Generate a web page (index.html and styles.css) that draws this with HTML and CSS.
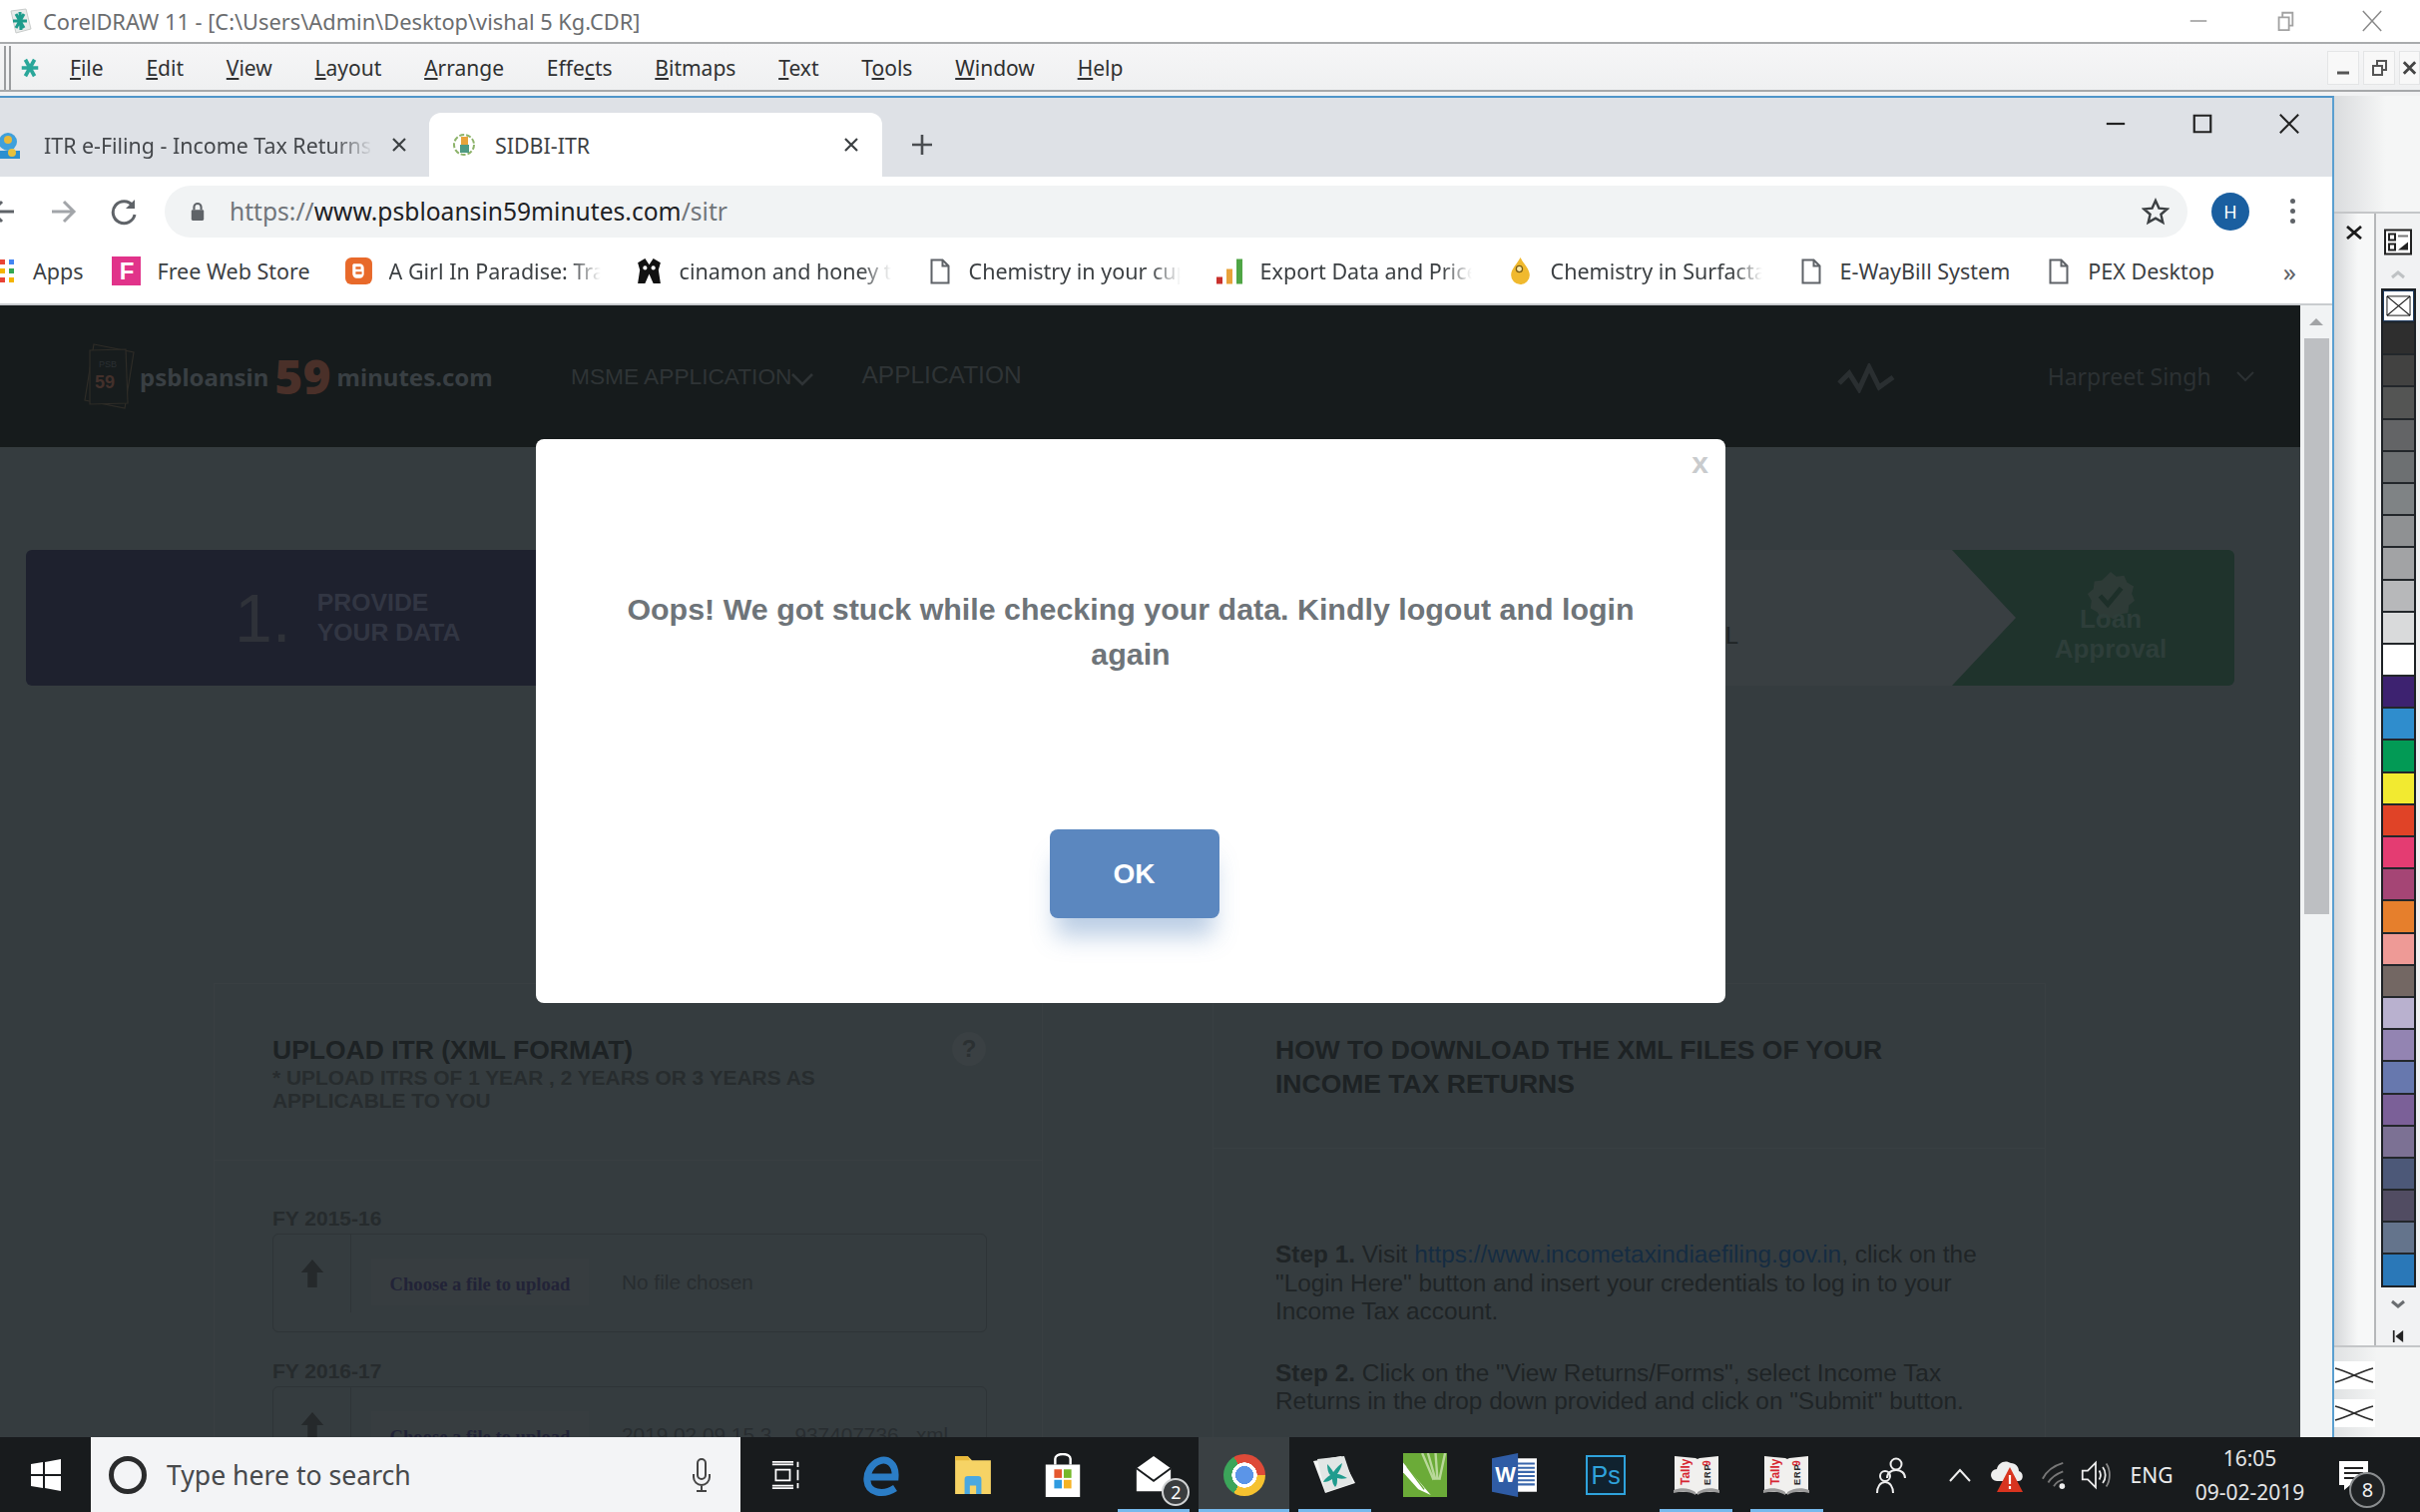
FILE: index.html
```html
<!DOCTYPE html>
<html lang="en">
<head>
    <meta charset="UTF-8">
    <title>CorelDRAW 11 - SIDBI-ITR</title>
    <link rel="stylesheet" href="styles.css">
</head>
<body>
    <div class="corel">
        <div class="titlebar">
            <svg class="corel-logo" viewBox="0 0 24 26"><path d="M3 3l15-2 5 20-15 4z" fill="#e9eceb" stroke="#c9cccb"/><path d="M8 6l8 14M16 6L8 20M12 4l1 18M5 13h14" stroke="#1e9c8c" stroke-width="3"/></svg>
            <span class="title-text">CorelDRAW 11 - [C:\Users\Admin\Desktop\vishal 5 Kg.CDR]</span>
            <div class="win-btns">
                <svg viewBox="0 0 24 24"><path d="M3 12h18" stroke="#aaa" stroke-width="2"/></svg>
                <svg viewBox="0 0 24 24"><path d="M5 8h11v14H5zM9 8V3h11v14h-4" fill="none" stroke="#a2a2a2" stroke-width="2"/></svg>
                <svg viewBox="0 0 24 24"><path d="M2 1l20 22M22 1L2 23" stroke="#8a8a8a" stroke-width="1.6"/></svg>
            </div>
        </div>
        <div class="menubar">
            <div class="grip"></div>
            <svg class="menu-logo" viewBox="0 0 24 28"><path d="M7 5l10 18M17 5L7 23M3 14h18" stroke="#2aa79a" stroke-width="4"/></svg>
            <nav class="menu">
                <span><u>F</u>ile</span>
                <span><u>E</u>dit</span>
                <span><u>V</u>iew</span>
                <span><u>L</u>ayout</span>
                <span><u>A</u>rrange</span>
                <span>Effe<u>c</u>ts</span>
                <span><u>B</u>itmaps</span>
                <span><u>T</u>ext</span>
                <span>T<u>o</u>ols</span>
                <span><u>W</u>indow</span>
                <span><u>H</u>elp</span>
            </nav>
            <div class="mdi-btns">
                <div class="mdi-btn"><svg viewBox="0 0 20 20"><path d="M4 15h12" stroke="#555" stroke-width="3"/></svg></div>
                <div class="mdi-btn"><svg viewBox="0 0 20 20"><path d="M4 8h9v9H4zM8 8V3h9v9h-4" fill="none" stroke="#555" stroke-width="2"/></svg></div>
                <div class="mdi-btn"><svg viewBox="0 0 20 20"><path d="M4 4l12 12M16 4L4 16" stroke="#444" stroke-width="3"/></svg></div>
            </div>
        </div>

        <div class="workspace">
            <div class="browser">
                <div class="tabstrip">
                    <div class="tab tab-back">
                        <svg class="favicon" viewBox="0 0 28 28"><circle cx="10" cy="11" r="9" fill="#3fa0dc"/><circle cx="10" cy="9" r="4" fill="#e8b93a"/><path d="M0 20h22v8H0z" fill="#2b8fd0"/><circle cx="14" cy="22" r="4" fill="#e8c13c"/></svg>
                        <span class="tab-title tab-fade">ITR e-Filing - Income Tax Returns</span>
                        <svg class="tab-close" viewBox="0 0 14 14"><path d="M1 1l12 12M13 1L1 13" stroke="#3c4043" stroke-width="2.2"/></svg>
                    </div>
                    <div class="tab tab-active">
                        <svg class="favicon" viewBox="0 0 28 28"><circle cx="14" cy="14" r="10" fill="none" stroke="#8db36a" stroke-width="2" stroke-dasharray="5 2"/><path d="M11 6h7v8h-7z" fill="#e8a33a"/><path d="M10 14h9v8h-9z" fill="#4f9a83"/></svg>
                        <span class="tab-title">SIDBI-ITR</span>
                        <svg class="tab-close" viewBox="0 0 14 14"><path d="M1 1l12 12M13 1L1 13" stroke="#3c4043" stroke-width="2.2"/></svg>
                    </div>
                    <svg class="new-tab" viewBox="0 0 24 24"><path d="M12 2v20M2 12h20" stroke="#4a4d51" stroke-width="2.6"/></svg>
                    <div class="chrome-btns">
                        <svg viewBox="0 0 24 24"><path d="M2 12h20" stroke="#222" stroke-width="2.4"/></svg>
                        <svg viewBox="0 0 24 24"><path d="M3 3h18v18H3z" fill="none" stroke="#222" stroke-width="2.4"/></svg>
                        <svg viewBox="0 0 24 24"><path d="M2 2l20 20M22 2L2 22" stroke="#222" stroke-width="2.2"/></svg>
                    </div>
                </div>

                <div class="toolbar">
                    <svg class="nav-icon nav-back" viewBox="0 0 28 28"><path d="M26 14H4M14 4L4 14l10 10" fill="none" stroke="#5f6368" stroke-width="3"/></svg>
                    <svg class="nav-icon nav-fwd" viewBox="0 0 28 28"><path d="M2 14h22M14 4l10 10-10 10" fill="none" stroke="#a2a5a9" stroke-width="3"/></svg>
                    <svg class="nav-icon nav-reload" viewBox="0 0 28 28"><path d="M23 8a11 11 0 1 0 2 9" fill="none" stroke="#5f6368" stroke-width="3"/><path d="M25 2v9h-9z" fill="#5f6368"/></svg>
                    <div class="omnibox">
                        <svg class="lock" viewBox="0 0 18 24"><path d="M5 10V7a4 4 0 0 1 8 0v3" fill="none" stroke="#5f6368" stroke-width="2.4"/><rect x="2" y="10" width="14" height="12" rx="1.5" fill="#5f6368"/></svg>
                        <span class="url"><span class="url-dim">https://</span>www.psbloansin59minutes.com<span class="url-dim">/sitr</span></span>
                        <svg class="star" viewBox="0 0 28 28"><path d="M14 3l3.4 7.6 8.2.8-6.2 5.4 1.900 8.100L14 20.600 6.700 24.900l1.900-8.100L2.400 11.400l8.200-.8z" fill="none" stroke="#3c4043" stroke-width="2.4"/></svg>
                    </div>
                    <div class="avatar">H</div>
                    <div class="kebab"><i></i><i></i><i></i></div>
                </div>

                <div class="bookmarks">
                    <div class="bm bm-apps">
                        <div class="apps-grid"><i></i><i></i><i></i><i></i><i></i><i></i></div>
                        <span>Apps</span>
                    </div>
                    <div class="bm">
                        <div class="bm-icon bm-f">F</div>
                        <span>Free Web Store</span>
                    </div>
                    <div class="bm">
                        <svg class="bm-icon" viewBox="0 0 28 28"><rect x="1" y="1" width="26" height="26" rx="6" fill="#e8692a"/><path d="M9 7h6a4 4 0 0 1 4 4v2a2 2 0 0 1 0 1v3a4 4 0 0 1-4 4H12a4 4 0 0 1-4-4V8z" fill="#fff"/><path d="M11 11h5M11 16h6" stroke="#e8692a" stroke-width="2.4"/></svg>
                        <span class="bm-fade">A Girl In Paradise: Travel</span>
                    </div>
                    <div class="bm">
                        <svg class="bm-icon" viewBox="0 0 28 28"><path d="M3 6l7-4 4 6 4-6 7 4-2 7 2 13h-7l-4-9-4 9H3l2-13z" fill="#111"/><circle cx="10" cy="11" r="2" fill="#fff"/><circle cx="18" cy="11" r="2" fill="#fff"/></svg>
                        <span class="bm-fade">cinamon and honey to lose</span>
                    </div>
                    <div class="bm bm-doc">
                        <svg class="doc" viewBox="0 0 20 26"><path d="M1.500 1.500h11l6 6v17h-17zM12.500 1.500v6h6" fill="none" stroke="#5f6368" stroke-width="2"/></svg>
                        <span class="bm-fade">Chemistry in your cup: checking</span>
                    </div>
                    <div class="bm">
                        <svg class="bm-icon bm-bars" viewBox="0 0 32 28"><path d="M2 20h6v7H2z" fill="#c9302c"/><path d="M12 12h6v15h-6z" fill="#e8a23a"/><path d="M22 2h6v25h-6z" fill="#4fa545"/></svg>
                        <span class="bm-fade">Export Data and Price</span>
                    </div>
                    <div class="bm">
                        <svg class="bm-icon" viewBox="0 0 28 28"><path d="M14 1c3 6 9 11 9 17a9 9 0 0 1-18 0c0-6 6-11 9-17z" fill="#f0b92e"/><circle cx="13" cy="12" r="3" fill="#fbe9a8" stroke="#7a5c12" stroke-width="1.2"/></svg>
                        <span class="bm-fade">Chemistry in Surfactants</span>
                    </div>
                    <div class="bm bm-doc">
                        <svg class="doc" viewBox="0 0 20 26"><path d="M1.500 1.500h11l6 6v17h-17zM12.500 1.500v6h6" fill="none" stroke="#5f6368" stroke-width="2"/></svg>
                        <span>E-WayBill System</span>
                    </div>
                    <div class="bm bm-doc">
                        <svg class="doc" viewBox="0 0 20 26"><path d="M1.500 1.500h11l6 6v17h-17zM12.500 1.500v6h6" fill="none" stroke="#5f6368" stroke-width="2"/></svg>
                        <span>PEX Desktop</span>
                    </div>
                    <span class="bm-more">»</span>
                </div>

                <div class="viewport">
                    <div class="page">
                        <header class="site-header">
                            <svg class="site-logo" viewBox="0 0 56 70"><path d="M14 3l40 8-9 56-40-8z" fill="none" stroke="#2e2c27" stroke-width="1.200"/><path d="M10 9l36-1 2 54-38 1z" fill="#171c1d" stroke="#2e2c27" stroke-width="1.200"/><text x="19" y="26" class="logo-psb">PSB</text><text x="15" y="47" class="logo-59">59</text></svg>
                            <div class="brand"><span>psbloansin</span><b class="brand-59">59</b><span>minutes.com</span></div>
                            <nav class="site-nav">
                                <span class="nav-msme">MSME APPLICATION</span>
                                <svg class="nav-chev" viewBox="0 0 24 14"><path d="M2 2l10 10L22 2" fill="none" stroke="#2f3436" stroke-width="2.6"/></svg>
                                <span class="nav-app">APPLICATION</span>
                            </nav>
                            <svg class="wave" viewBox="0 0 60 30"><path d="M2 20l10-10 10 16 10-22 10 20 14-10" fill="none" stroke="#2a2f31" stroke-width="5"/></svg>
                            <span class="user-name">Harpreet Singh</span>
                            <svg class="user-chev" viewBox="0 0 20 12"><path d="M2 2l8 8 8-8" fill="none" stroke="#2c3133" stroke-width="2"/></svg>
                        </header>

                        <section class="steps">
                            <div class="step-first">
                                <span class="step-num">1.</span>
                                <span class="step-label">PROVIDE<br>YOUR DATA</span>
                            </div>
                            <div class="step-mid"><span class="step-mid-tail">L</span></div>
                            <div class="step-last">
                                <svg class="badge" viewBox="0 0 52 52"><path d="M26 1l6 5 8-1 3 7 7 4-2 8 3 7-6 5-1 8-8 1-5 6-7-3-8 2-4-7-7-4 1-8-4-7 6-5 1-8 8-1z" fill="#2e3b37"/><path d="M15 26l8 9 14-17" fill="none" stroke="#1d2f29" stroke-width="5"/></svg>
                                <span class="step-last-text">Loan<br>Approval</span>
                            </div>
                        </section>

                        <section class="cards">
                            <div class="card card-upload">
                                <div class="card-head">
                                    <h2>UPLOAD ITR (XML FORMAT)</h2>
                                    <p class="card-sub">* UPLOAD ITRS OF 1 YEAR , 2 YEARS OR 3 YEARS AS<br>APPLICABLE TO YOU</p>
                                    <span class="help">?</span>
                                </div>
                                <div class="card-body">
                                    <div class="fy">FY 2015-16</div>
                                    <div class="file-box">
                                        <div class="file-cell"><svg viewBox="0 0 24 30"><path d="M12 0l12 14h-7v16H7V14H0z" fill="#25292b"/></svg></div>
                                        <div class="file-btn">Choose a file to upload</div>
                                        <span class="file-name">No file chosen</span>
                                    </div>
                                    <div class="fy">FY 2016-17</div>
                                    <div class="file-box">
                                        <div class="file-cell"><svg viewBox="0 0 24 30"><path d="M12 0l12 14h-7v16H7V14H0z" fill="#25292b"/></svg></div>
                                        <div class="file-btn">Choose a file to upload</div>
                                        <span class="file-name">2019 02 09 15 3... 937407736...xml</span>
                                    </div>
                                </div>
                            </div>
                            <div class="card card-help">
                                <div class="card-head">
                                    <h2>HOW TO DOWNLOAD THE XML FILES OF YOUR<br>INCOME TAX RETURNS</h2>
                                </div>
                                <div class="card-body">
                                    <p class="how-step"><b>Step 1.</b> Visit <a class="how-link">https://www.incometaxindiaefiling.gov.in</a>, click on the "Login Here" button and insert your credentials to log in to your Income Tax account.</p>
                                    <p class="how-step"><b>Step 2.</b> Click on the "View Returns/Forms", select Income Tax Returns in the drop down provided and click on "Submit" button.</p>
                                </div>
                            </div>
                        </section>

                        <div class="modal">
                            <span class="modal-close">x</span>
                            <p class="modal-msg">Oops! We got stuck while checking your data. Kindly logout and login again</p>
                            <button class="modal-ok">OK</button>
                        </div>
                    </div>
                    <div class="scrollbar">
                        <div class="scroll-up"></div>
                        <div class="scroll-thumb"></div>
                    </div>
                </div>
            </div>

            <aside class="docker">
                <div class="docker-top"></div>
                <div class="docker-main">
                    <div class="docker-panel">
                        <svg class="docker-x" viewBox="0 0 18 14"><path d="M2 1l14 12M16 1L2 13" stroke="#1c1c1c" stroke-width="2.8"/></svg>
                    </div>
                    <div class="palette">
                        <svg class="palette-icon" viewBox="0 0 28 26"><rect x="1" y="1" width="26" height="24" fill="#fff" stroke="#222" stroke-width="2"/><path d="M5 5h6v6H5zM5 15h6v6H5z" fill="none" stroke="#222" stroke-width="2"/><path d="M14 7h10" stroke="#777" stroke-width="2"/><path d="M14 21l10-8v8z" fill="#222"/></svg>
                        <svg class="pal-arrow" viewBox="0 0 16 10"><path d="M2 8l6-5 6 5" fill="none" stroke="#bfc2c4" stroke-width="3"/></svg>
                        <div class="swatches">
                            <div class="swatch-none"><svg viewBox="0 0 26 22"><path d="M1 1h24v20H1z" fill="#fff" stroke="#111"/><path d="M1 1l24 20M25 1L1 21" stroke="#111" stroke-width="1.2"/></svg></div>
                            <i></i><i></i><i></i><i></i><i></i><i></i><i></i><i></i><i></i><i></i>
                            <i></i><i></i><i></i><i></i><i></i><i></i><i></i><i></i><i></i><i></i>
                            <i></i><i></i><i></i><i></i><i></i><i></i><i></i><i></i><i></i><i></i>
                        </div>
                        <svg class="pal-arrow pal-down" viewBox="0 0 16 10"><path d="M2 2l6 5 6-5" fill="none" stroke="#6a6d70" stroke-width="3"/></svg>
                        <svg class="pal-first" viewBox="0 0 14 14"><path d="M1 0h2v14H1zM13 0v14L4 7z" fill="#222"/></svg>
                    </div>
                </div>
                <div class="docker-bottom">
                    <div class="cross-btn"><svg viewBox="0 0 40 20"><path d="M1 3c12 3 26 11 38 14M39 3C27 6 13 14 1 17" fill="none" stroke="#2b2b2b" stroke-width="1.8"/></svg></div>
                    <div class="cross-btn"><svg viewBox="0 0 40 20"><path d="M1 3c12 3 26 11 38 14M39 3C27 6 13 14 1 17" fill="none" stroke="#2b2b2b" stroke-width="1.8"/></svg></div>
                </div>
            </aside>
        </div>
    </div>

    <footer class="taskbar">
        <div class="start"><svg viewBox="0 0 32 32"><path d="M1 5l12-2v12H1zM15 3l16-3v15H15zM1 17h12v12L1 27zM15 17h16v15l-16-3z" fill="#fff"/></svg></div>
        <div class="search">
            <div class="cortana"></div>
            <span class="search-text">Type here to search</span>
            <svg class="mic" viewBox="0 0 20 34"><rect x="6" y="1" width="8" height="20" rx="4" fill="none" stroke="#444" stroke-width="2"/><path d="M2 16v3a8 8 0 0 0 16 0v-3M10 27v6M5 33h10" fill="none" stroke="#444" stroke-width="2"/></svg>
        </div>
        <div class="task task-view"><svg viewBox="0 0 34 36"><path d="M5 12h16v12H5zM1 3h24M1 6h24M1 30h24M1 33h24M30 3v6M30 12v12M30 27v6" fill="none" stroke="#fff" stroke-width="2"/></svg></div>
        <div class="task"><svg viewBox="0 0 40 44"><path d="M7 24h26C34 10 25 5 17 8 9 11 4 20 5 28c1 12 16 15 28 7" fill="none" stroke="#2b7dc6" stroke-width="7"/></svg></div>
        <div class="task"><svg viewBox="0 0 38 40"><path d="M2 2h12l4 4h18v32H2z" fill="#f6d365"/><path d="M2 2h12l2 4H2z" fill="#e8b93a"/><path d="M11 38V24a3 3 0 0 1 3-3h10a3 3 0 0 1 3 3v14h-5v-8h-6v8z" fill="#4aa8e0"/></svg></div>
        <div class="task"><svg viewBox="0 0 38 46"><path d="M1 12h36v34H1z" fill="#fff"/><path d="M11 12V6a8 5 0 0 1 16 0v6" fill="none" stroke="#fff" stroke-width="2.5"/><path d="M10 17h8v9h-8z" fill="#e4572e"/><path d="M20 17h8v9h-8z" fill="#76b82a"/><path d="M10 28h8v9h-8z" fill="#2f9be0"/><path d="M20 28h8v9h-8z" fill="#f5b325"/></svg></div>
        <div class="task task-open">
            <svg viewBox="0 0 42 42"><path d="M3 14L21 1l18 13v24H3z" fill="#fff"/><path d="M3 14l18 13 18-13" fill="none" stroke="#181b1d" stroke-width="2"/></svg>
            <span class="task-badge">2</span>
        </div>
        <div class="task task-open task-active"><div class="chrome-logo"></div></div>
        <div class="task task-open"><svg class="icon-wide" viewBox="0 0 46 40"><path d="M2 6l28-5 14 27-30 10z" fill="#f3f5f4"/><path d="M6 4l27-3 9 27-28 9z" fill="#e2e6e5"/><path d="M16 9c3 3 5 6 6 8 2-2 4-6 9-9-1 5-3 8-5 11 3 0 6 2 10 4-4 1-7 1-10 0 0 4 0 7-2 9-2-2-3-5-3-8-3 2-5 3-9 3 1-3 4-5 7-7-2-2-3-6-3-11z" fill="#1f9c8e"/></svg></div>
        <div class="task"><svg class="icon-wide" viewBox="0 0 46 46"><path d="M0 0h46v46H0z" fill="#6bab38"/><path d="M20 0l12 28M26 0l8 28M34 0l2 28M44 0L38 28" stroke="#b9d89a" stroke-width="2.5"/><path d="M0 10l29 34-13-6L0 20z" fill="#fff"/><path d="M4 14l18 24" stroke="#6bab38" stroke-width="1.5"/></svg></div>
        <div class="task"><svg class="icon-wide" viewBox="0 0 44 42"><path d="M22 5h21v32H22z" fill="#fff"/><path d="M24 10h17M24 14h17M24 18h17M24 22h17M24 26h17M24 30h17" stroke="#3a67ab" stroke-width="2"/><path d="M0 5l25-5v42L0 37z" fill="#2f5ca5"/><text x="3" y="28" class="word-w">W</text></svg></div>
        <div class="task"><div class="ps">Ps</div></div>
        <div class="task task-open">
            <svg class="icon-wide" viewBox="0 0 46 44"><path d="M1 3l21 2 2 1 2-1 19-2v36H26l-3 2-3-2H1z" fill="#f1f0ee"/><path d="M0 37c8-3 16-2 22 2v3C16 38 8 38 0 40zM46 37c-8-3-16-2-22 2v3c6-4 14-4 22-2z" fill="#9a9a9a"/><text transform="translate(16 32) rotate(-90)" class="tally-word">Tally</text><text transform="translate(37 13) rotate(-90)" class="tally-nine">9</text><text transform="translate(37 32) rotate(-90)" class="tally-erp">ERP</text></svg>
        </div>
        <div class="task task-open">
            <svg class="icon-wide" viewBox="0 0 46 44"><path d="M1 3l21 2 2 1 2-1 19-2v36H26l-3 2-3-2H1z" fill="#f1f0ee"/><path d="M0 37c8-3 16-2 22 2v3C16 38 8 38 0 40zM46 37c-8-3-16-2-22 2v3c6-4 14-4 22-2z" fill="#9a9a9a"/><text transform="translate(16 32) rotate(-90)" class="tally-word">Tally</text><text transform="translate(37 13) rotate(-90)" class="tally-nine">9</text><text transform="translate(37 32) rotate(-90)" class="tally-erp">ERP</text></svg>
        </div>

        <div class="tray">
            <svg class="tray-people" viewBox="0 0 32 38"><circle cx="21" cy="8" r="5.500" fill="none" stroke="#eee" stroke-width="2"/><path d="M12 22c0-5 4-8 9-8s9 3 9 8" fill="none" stroke="#eee" stroke-width="2"/><circle cx="10" cy="20" r="5" fill="none" stroke="#eee" stroke-width="2"/><path d="M2 37c0-6 3-11 8-11s8 5 8 11" fill="none" stroke="#eee" stroke-width="2"/></svg>
            <svg class="tray-caret" viewBox="0 0 24 14"><path d="M2 13L12 2l10 11" fill="none" stroke="#eee" stroke-width="2"/></svg>
            <svg class="tray-cloud" viewBox="0 0 34 36"><path d="M6 24a6 6 0 0 1 0-12c1-6 8-10 14-6 5 0 8 4 8 8 5 1 5 10 0 10z" fill="#eee"/><path d="M19 10l13 25H6z" fill="#d8341f"/><path d="M19 18v9M19 29v3" stroke="#fff" stroke-width="2.2"/></svg>
            <svg class="tray-wifi" viewBox="0 0 28 32"><path d="M2 20C6 12 14 6 24 3M8 24c3-5 8-9 16-12M14 28c2-3 5-6 10-7" fill="none" stroke="#777" stroke-width="2"/><circle cx="23" cy="28" r="3" fill="#eee"/></svg>
            <svg class="tray-vol" viewBox="0 0 34 36"><path d="M2 13h6l9-9v28l-9-9H2z" fill="none" stroke="#eee" stroke-width="2"/><path d="M21 13c2 3 2 7 0 10M25 9c4 5 4 13 0 18" fill="none" stroke="#eee" stroke-width="2"/><path d="M29 5c5 7 5 19 0 26" fill="none" stroke="#888" stroke-width="2"/></svg>
            <span class="tray-lang">ENG</span>
            <div class="clock"><span>16:05</span><span>09-02-2019</span></div>
            <div class="notify">
                <svg viewBox="0 0 31 30"><path d="M1 1h29v24H12l-6 5v-5H1z" fill="#fff"/><path d="M6 8h19M6 13h19M6 18h19" stroke="#222" stroke-width="2.2"/></svg>
                <span class="notify-badge">8</span>
            </div>
        </div>
    </footer>
</body>
</html>
```

FILE: styles.css
```css
* {
    box-sizing: border-box;
}
html, body {
    margin: 0;
    padding: 0;
}
body {
    width: 2425px;
    height: 1515px;
    overflow: hidden;
    display: flex;
    flex-direction: column;
    font-family: "Noto Sans", sans-serif;
    background-color: #f2f3f4;
}

/* CorelDRAW window */
.corel {
    height: 1440px;
    display: flex;
    flex-direction: column;
}
.titlebar {
    height: 44px;
    flex: none;
    display: flex;
    align-items: center;
    background-color: #fff;
    border-bottom: 2px solid #a9abad;
    padding-left: 8px;
}
.corel-logo {
    width: 24px;
    height: 26px;
    margin-right: 11px;
}
.title-text {
    font-size: 21.800px;
    color: #6b6d6f;
}
.win-btns {
    margin-left: auto;
    display: flex;
    align-items: center;
}
.win-btns svg {
    width: 22px;
    height: 24px;
    margin-left: 65px;
}
.win-btns svg:last-child {
    margin-right: 37px;
}
.menubar {
    height: 48px;
    flex: none;
    display: flex;
    align-items: center;
    padding-top: 2px;
    background: linear-gradient(#f6f6f7, #eff0f1);
    border-bottom: 2px solid #a6a8aa;
}
.grip {
    width: 7px;
    height: 44px;
    margin-left: 4px;
    border-left: 2px solid #9a9c9e;
    border-right: 2px solid #9a9c9e;
}
.menu-logo {
    width: 22px;
    height: 28px;
    margin-left: 8px;
}
.menu {
    display: flex;
    gap: 42.800px;
    margin-left: 29px;
    font-size: 21px;
    color: #303132;
}
.mdi-btns {
    margin-left: auto;
    display: flex;
    gap: 4px;
}
.mdi-btn {
    width: 32px;
    height: 34px;
    background-color: #f8f8f8;
    border: 1px solid #e4e5e6;
    display: flex;
    align-items: center;
    justify-content: center;
}
.mdi-btn svg {
    width: 20px;
    height: 20px;
}
.mdi-btn:last-child {
    width: 21px;
    justify-content: flex-start;
}
.workspace {
    flex: 1;
    min-height: 0;
    display: flex;
    padding-top: 4px;
    background-color: #f1f2f3;
}

/* Chrome window */
.browser {
    width: 2339px;
    flex: none;
    display: flex;
    flex-direction: column;
    border-top: 2px solid #4f95c9;
    border-right: 2px solid #5a9fd0;
    background-color: #fff;
}
.tabstrip {
    height: 79px;
    flex: none;
    display: flex;
    align-items: flex-end;
    background-color: #dee1e6;
    position: relative;
}
.tab {
    height: 64px;
    display: flex;
    align-items: center;
    font-size: 21.400px;
    color: #44474b;
}
.tab-back {
    width: 430px;
}
.tab-back .favicon {
    margin-left: -2px;
}
.tab-active {
    width: 454px;
    background-color: #fff;
    border-radius: 12px 12px 0 0;
    color: #3c4043;
}
.tab-active .favicon {
    margin-left: 21px;
}
.favicon {
    width: 28px;
    height: 28px;
    flex: none;
}
.tab-title {
    margin-left: 18px;
    width: 330px;
    white-space: nowrap;
    overflow: hidden;
}
.tab-active .tab-title {
    margin-left: 17px;
    width: 331px;
}
.tab-fade {
    mask-image: linear-gradient(to right, #000 88%, transparent);
}
.tab-close {
    width: 14px;
    height: 14px;
    margin-left: 19px;
    flex: none;
}
.new-tab {
    width: 24px;
    height: 24px;
    margin: 0 0 20px 28px;
}
.chrome-btns {
    margin-left: auto;
    align-self: flex-start;
    display: flex;
    margin-top: 15px;
    margin-right: 32px;
    gap: 65px;
}
.chrome-btns svg {
    width: 22px;
    height: 22px;
}
.toolbar {
    height: 64px;
    flex: none;
    display: flex;
    align-items: center;
    padding-top: 5px;
}
.nav-icon {
    width: 28px;
    height: 28px;
    flex: none;
}
.nav-back {
    margin-left: -12px;
}
.nav-fwd {
    margin-left: 34px;
}
.nav-reload {
    margin-left: 32px;
}
.omnibox {
    width: 2027px;
    height: 52px;
    margin-left: 27px;
    border-radius: 26px;
    background-color: #f1f3f4;
    display: flex;
    align-items: center;
    flex: none;
}
.lock {
    width: 16px;
    height: 22px;
    margin-left: 25px;
}
.url {
    margin-left: 24px;
    font-size: 24.600px;
    color: #202124;
}
.url-dim {
    color: #70757a;
}
.star {
    width: 28px;
    height: 28px;
    margin-left: auto;
    margin-right: 18px;
}
.avatar {
    width: 38px;
    height: 38px;
    margin-left: 24px;
    border-radius: 50%;
    background-color: #1a5fa0;
    color: #fff;
    font-size: 18px;
    display: flex;
    align-items: center;
    justify-content: center;
    flex: none;
}
.kebab {
    width: 6px;
    margin-left: 41px;
    display: flex;
    flex-direction: column;
    gap: 5px;
}
.kebab i {
    width: 5px;
    height: 5px;
    border-radius: 50%;
    background-color: #5f6368;
}
.bookmarks {
    height: 65px;
    flex: none;
    display: flex;
    align-items: center;
    padding-bottom: 2px;
    font-size: 21.500px;
    color: #3c4043;
    border-bottom: 2px solid #c9cccf;
}
.bm {
    display: flex;
    align-items: center;
    margin-right: 34px;
    white-space: nowrap;
}
.bm-apps {
    margin-right: 29px;
}
.apps-grid {
    display: grid;
    grid-template-columns: repeat(2, 5px);
    gap: 4px;
    margin-right: 19px;
}
.apps-grid i {
    width: 5px;
    height: 5px;
}
.apps-grid i:nth-child(1) { background-color: #e94335; }
.apps-grid i:nth-child(2) { background-color: #4285f4; }
.apps-grid i:nth-child(3) { background-color: #f4b400; }
.apps-grid i:nth-child(4) { background-color: #34a853; }
.apps-grid i:nth-child(5) { background-color: #e94335; }
.apps-grid i:nth-child(6) { background-color: #f4b400; }
.bm-icon {
    width: 29px;
    height: 29px;
    flex: none;
    margin-right: 16px;
}
.bm-f {
    background-color: #e1338a;
    color: #fff;
    font: bold 24px "Liberation Sans", sans-serif;
    display: flex;
    align-items: center;
    justify-content: center;
}
.bm-bars {
    width: 32px;
    margin-right: 14px;
}
.bm-fade {
    width: 212px;
    overflow: hidden;
    mask-image: linear-gradient(to right, #000 86%, transparent);
}
.doc {
    width: 20px;
    height: 26px;
    margin: 0 19px 0 5px;
}
.bm-more {
    margin-left: auto;
    margin-right: 36px;
    font-size: 26px;
    color: #5f6368;
}
.viewport {
    flex: 1;
    min-height: 0;
    display: flex;
    overflow: hidden;
}

/* page behind the dialog */
.page {
    width: 2305px;
    flex: none;
    position: relative;
    background-color: #353c3f;
    overflow: hidden;
    font-family: "Liberation Sans", sans-serif;
}
.site-header {
    height: 142px;
    display: flex;
    align-items: center;
    background-color: #161b1c;
}
.site-logo {
    width: 56px;
    height: 70px;
    margin-left: 80px;
    flex: none;
}
.logo-psb {
    font: 9px "Liberation Sans", sans-serif;
    fill: #2b3033;
}
.logo-59 {
    font: bold 18px "Liberation Sans", sans-serif;
    fill: #43302b;
}
.brand {
    display: flex;
    align-items: center;
    margin-left: 4px;
    font: bold 24px "Noto Sans", sans-serif;
    color: #393f43;
    width: 353px;
    flex: none;
}
.brand-59 {
    font-size: 48px;
    line-height: 1;
    margin: 0 6px 0 6px;
    color: #4a3029;
}
.site-nav {
    display: flex;
    align-items: center;
    font-size: 22.700px;
    color: #2f3436;
    margin-left: 79px;
}
.nav-msme {
    margin-top: 1px;
}
.nav-chev {
    width: 24px;
    height: 14px;
    margin-top: 6px;
    margin-left: -1px;
}
.nav-app {
    margin-left: 47px;
    margin-top: -2px;
    font-size: 24.500px;
}
.wave {
    width: 60px;
    height: 30px;
    margin-left: 817px;
    margin-top: 3px;
}
.user-name {
    margin-left: 151px;
    font-size: 23px;
    font-family: "Noto Sans", sans-serif;
    color: #2c3133;
}
.user-chev {
    width: 20px;
    height: 12px;
    margin-left: 24px;
}
.steps {
    margin: 103px 0 0 26px;
    width: 2213px;
    height: 136px;
    display: flex;
}
.step-first {
    width: 1000px;
    flex: none;
    background-color: #1e212e;
    border-radius: 6px 0 0 6px;
    display: flex;
    align-items: center;
    padding-left: 209px;
}
.step-num {
    font-size: 68px;
    color: #2f3239;
}
.step-label {
    margin-left: 26px;
    font-size: 24.800px;
    line-height: 30px;
    font-weight: bold;
    color: #323643;
}
.step-mid {
    flex: 1;
    background-color: #393f42;
    display: flex;
    justify-content: flex-end;
    align-items: flex-end;
    padding: 0 214px 36px 0;
    font-size: 24px;
    color: #1f2426;
}
.step-last {
    width: 283px;
    flex: none;
    background-color: #1f332c;
    border-radius: 0 6px 6px 0;
    position: relative;
    display: flex;
    flex-direction: column;
    align-items: center;
    padding-left: 35px;
    padding-top: 21px;
}
.step-last::before {
    content: "";
    position: absolute;
    left: 0;
    top: 0;
    width: 64px;
    height: 100%;
    background-color: #393f42;
    clip-path: polygon(0 0, 100% 50%, 0 100%);
}
.badge {
    width: 50px;
    height: 50px;
    flex: none;
}
.step-last-text {
    margin-top: -17px;
    font-size: 26px;
    line-height: 30px;
    font-weight: bold;
    text-align: center;
    color: #2e3e3a;
}
.cards {
    margin: 298px 0 0 214px;
    display: flex;
    gap: 170px;
}
.card {
    border: 1px solid #393f42;
    height: 600px;
}
.card-upload {
    width: 831px;
}
.card-help {
    width: 835px;
}
.card-head {
    position: relative;
    padding: 49px 0 0 58px;
    border-bottom: 1px solid #393f42;
}
.card-upload .card-head {
    height: 177px;
}
.card-help .card-head {
    height: 165px;
    padding-left: 62px;
}
.card-head h2 {
    margin: 0 0 -1px;
    font-size: 26.500px;
    line-height: 34px;
    color: #1d2224;
}
.card-sub {
    margin: 0;
    font-size: 20.900px;
    line-height: 23px;
    font-weight: bold;
    color: #272c2e;
}
.help {
    position: absolute;
    left: 739px;
    top: 48px;
    width: 34px;
    height: 34px;
    border-radius: 50%;
    background-color: #3a4043;
    color: #2b3032;
    font: bold 24px "Liberation Sans", sans-serif;
    display: flex;
    align-items: center;
    justify-content: center;
}
.card-upload .card-body {
    padding: 45px 0 0 58px;
}
.card-help .card-body {
    padding: 92px 0 0 62px;
}
.fy {
    font-size: 21px;
    line-height: 26px;
    font-weight: bold;
    color: #262b2d;
    margin-bottom: 2px;
}
.file-box {
    width: 716px;
    height: 99px;
    border: 1px solid #2e3437;
    border-radius: 6px;
    display: flex;
    align-items: flex-start;
    margin-bottom: 26px;
}
.file-cell {
    width: 78px;
    height: 78px;
    flex: none;
    border-right: 1px solid #2f3538;
    display: flex;
    justify-content: center;
    padding-top: 25px;
}
.file-cell svg {
    width: 24px;
    height: 28px;
}
.file-btn {
    width: 218px;
    height: 47px;
    margin: 24px 0 0 20px;
    padding-top: 15px;
    background-color: #373d40;
    text-align: center;
    font: bold 18.600px "Liberation Serif", serif;
    color: #222337;
}
.file-name {
    margin: 36px 0 0 33px;
    font-size: 20.800px;
    color: #282d30;
    white-space: nowrap;
}
.how-step {
    width: 730px;
    margin: 0 0 33px;
    font-size: 24.400px;
    line-height: 28.500px;
    color: #1f2426;
}
.how-link {
    color: #152c42;
}

/* dialog */
.modal {
    position: absolute;
    left: 537px;
    top: 134px;
    width: 1192px;
    height: 565px;
    padding: 148px 80px 0;
    background-color: #fff;
    border-radius: 8px;
    display: flex;
    flex-direction: column;
    align-items: center;
}
.modal-close {
    position: absolute;
    right: 17px;
    top: 7px;
    font: bold 30px "Liberation Sans", sans-serif;
    color: #c9cbcd;
}
.modal-msg {
    margin: 0;
    font: bold 30.400px/45px "Liberation Sans", sans-serif;
    color: #6e7479;
    text-align: center;
}
.modal-ok {
    width: 170px;
    height: 89px;
    margin: 153px 0 0 7px;
    border: none;
    border-radius: 8px;
    background-color: #5b87bf;
    color: #fff;
    font: bold 28px "Liberation Sans", sans-serif;
    box-shadow: 0 24px 24px -6px rgba(91, 135, 191, .42);
}
.scrollbar {
    flex: 1;
    background-color: #f1f3f4;
    display: flex;
    flex-direction: column;
    align-items: center;
}
.scroll-up {
    margin-top: 13px;
    width: 0;
    height: 0;
    border-left: 7px solid transparent;
    border-right: 7px solid transparent;
    border-bottom: 7px solid #a2a4a6;
}
.scroll-thumb {
    width: 25px;
    height: 577px;
    margin-top: 13px;
    background-color: #bdbfc2;
}

/* docker beside the browser */
.docker {
    flex: 1;
    min-width: 0;
    display: flex;
    flex-direction: column;
}
.docker-top {
    height: 116px;
    flex: none;
    background: linear-gradient(to right, #dadcde, #f5f6f6 60%);
}
.docker-main {
    height: 1138px;
    flex: none;
    display: flex;
    border-top: 2px solid #c4c6c8;
    border-bottom: 2px solid #c4c6c8;
}
.docker-panel {
    width: 42px;
    flex: none;
    background: linear-gradient(to right, #d5d7d9, #f7f8f8 60%);
    border-right: 2px solid #b5b7b9;
    display: flex;
    justify-content: center;
    padding-top: 12px;
}
.docker-x {
    width: 18px;
    height: 14px;
}
.palette {
    flex: 1;
    display: flex;
    flex-direction: column;
    align-items: center;
}
.palette-icon {
    width: 28px;
    height: 27px;
    margin-top: 15px;
    flex: none;
}
.pal-arrow {
    width: 16px;
    height: 10px;
    margin-top: 14px;
    flex: none;
}
.swatches {
    width: 35px;
    margin-top: 9px;
    background-color: #1d2125;
    border: 2px solid #1d2125;
    display: flex;
    flex-direction: column;
    flex: none;
}
.swatch-none {
    height: 31px;
    padding: 2px;
    background-color: #fff;
    display: flex;
    border: 1px solid #1e3a5f;
}
.swatch-none svg {
    width: 100%;
    height: 100%;
}
.swatches i {
    display: block;
    height: 32.200px;
    border-top: 2px solid #23272b;
}
.swatches i:nth-of-type(1) { background-color: #2e2e2e; }
.swatches i:nth-of-type(2) { background-color: #424241; }
.swatches i:nth-of-type(3) { background-color: #545554; }
.swatches i:nth-of-type(4) { background-color: #636466; }
.swatches i:nth-of-type(5) { background-color: #6d7072; }
.swatches i:nth-of-type(6) { background-color: #7f8385; }
.swatches i:nth-of-type(7) { background-color: #8f9193; }
.swatches i:nth-of-type(8) { background-color: #a2a3a5; }
.swatches i:nth-of-type(9) { background-color: #b7b8ba; }
.swatches i:nth-of-type(10) { background-color: #d9dadb; }
.swatches i:nth-of-type(11) { background-color: #ffffff; }
.swatches i:nth-of-type(12) { background-color: #3d2270; }
.swatches i:nth-of-type(13) { background-color: #2f8dcd; }
.swatches i:nth-of-type(14) { background-color: #029a55; }
.swatches i:nth-of-type(15) { background-color: #f2ea30; }
.swatches i:nth-of-type(16) { background-color: #e04327; }
.swatches i:nth-of-type(17) { background-color: #e43c72; }
.swatches i:nth-of-type(18) { background-color: #a54575; }
.swatches i:nth-of-type(19) { background-color: #e67f2c; }
.swatches i:nth-of-type(20) { background-color: #ee9a96; }
.swatches i:nth-of-type(21) { background-color: #736763; }
.swatches i:nth-of-type(22) { background-color: #b9b1cf; }
.swatches i:nth-of-type(23) { background-color: #9384b2; }
.swatches i:nth-of-type(24) { background-color: #6778ae; }
.swatches i:nth-of-type(25) { background-color: #7b6098; }
.swatches i:nth-of-type(26) { background-color: #7c7194; }
.swatches i:nth-of-type(27) { background-color: #4c5878; }
.swatches i:nth-of-type(28) { background-color: #514c62; }
.swatches i:nth-of-type(29) { background-color: #64748c; }
.swatches i:nth-of-type(30) { background-color: #2a78b8; }
.pal-down {
    margin-top: 12px;
}
.pal-first {
    width: 12px;
    height: 14px;
    margin-top: 20px;
    flex: none;
}
.docker-bottom {
    flex: 1;
    background: linear-gradient(to right, #e0e2e3, #f3f4f4 50%);
    padding-top: 14px;
    display: flex;
    flex-direction: column;
    gap: 10px;
}
.cross-btn {
    width: 41px;
    height: 28px;
    background-color: #fff;
    display: flex;
    align-items: center;
}
.cross-btn svg {
    width: 40px;
    height: 20px;
}

/* taskbar */
.taskbar {
    height: 75px;
    flex: none;
    display: flex;
    align-items: stretch;
    background-color: #181b1d;
}
.start {
    width: 91px;
    flex: none;
    display: flex;
    align-items: center;
    justify-content: center;
}
.start svg {
    width: 32px;
    height: 32px;
}
.search {
    width: 651px;
    flex: none;
    background-color: #f3f4f6;
    display: flex;
    align-items: center;
}
.cortana {
    width: 38px;
    height: 38px;
    margin-left: 18px;
    border: 5px solid #2a2b2c;
    border-radius: 50%;
}
.search-text {
    margin-left: 20px;
    font-size: 26.600px;
    color: #47494b;
}
.mic {
    width: 20px;
    height: 34px;
    margin-left: auto;
    margin-right: 29px;
}
.task {
    width: 90.600px;
    flex: none;
    position: relative;
    display: flex;
    align-items: center;
    justify-content: center;
}
.task svg {
    width: 40px;
    height: 44px;
}
.task svg.icon-wide {
    width: 46px;
    height: 44px;
}
.task-view {
    width: 97px;
    padding-right: 6px;
}
.task-view svg {
    width: 30px;
    height: 32px;
}
.word-w {
    font: bold 21px "Liberation Sans", sans-serif;
    fill: #fff;
}
.tally-word {
    font: bold 12px "Liberation Sans", sans-serif;
    fill: #d72631;
}
.tally-nine {
    font: bold 10px "Liberation Sans", sans-serif;
    fill: #d72631;
}
.tally-erp {
    font: bold 9px "Liberation Sans", sans-serif;
    letter-spacing: 1px;
    fill: #2a2a2a;
}
.task-open::after {
    content: "";
    position: absolute;
    left: 9px;
    right: 9px;
    bottom: 0;
    height: 3px;
    background-color: #76b9ed;
}
.task-active {
    background-color: #3a4043;
}
.task-active::after {
    left: 0;
    right: 0;
}
.task-badge {
    position: absolute;
    right: 9px;
    bottom: 6px;
    width: 28px;
    height: 28px;
    border-radius: 50%;
    background-color: #3a3d3f;
    border: 2px solid #d0d2d3;
    color: #fff;
    font-size: 18px;
    line-height: 24px;
    text-align: center;
}
.chrome-logo {
    width: 42px;
    height: 42px;
    border-radius: 50%;
    background:
        radial-gradient(circle, #5b95e8 0 30%, #fff 31% 42%, transparent 43%),
        conic-gradient(from 330deg, #de4a38 0 120deg, #f6c22f 120deg 240deg, #3ba55a 240deg 360deg);
}
.ps {
    width: 40px;
    height: 40px;
    border: 2px solid #2fa3dc;
    background-color: #10222f;
    color: #2fa3dc;
    font: 25px/36px "Liberation Sans", sans-serif;
    text-align: center;
}
.tray {
    flex: 1;
    display: flex;
    align-items: center;
}
.tray-people {
    width: 32px;
    height: 38px;
    margin-left: 43px;
}
.tray-caret {
    width: 24px;
    height: 14px;
    margin-left: 41px;
}
.tray-cloud {
    width: 34px;
    height: 36px;
    margin-left: 19px;
}
.tray-wifi {
    width: 26px;
    height: 30px;
    margin-left: 16px;
}
.tray-vol {
    width: 30px;
    height: 36px;
    margin-left: 14px;
}
.tray-lang {
    margin-left: 20px;
    font-size: 21px;
    color: #eceded;
}
.clock {
    width: 114px;
    margin-left: 20px;
    display: flex;
    flex-direction: column;
    align-items: center;
    gap: 10px;
    font-size: 21px;
    line-height: 24px;
    color: #e4e5e6;
}
.notify {
    position: relative;
    width: 31px;
    height: 30px;
    margin-left: 32px;
}
.notify svg {
    width: 31px;
    height: 30px;
}
.notify-badge {
    position: absolute;
    left: 11px;
    top: 12px;
    width: 36px;
    height: 36px;
    border-radius: 50%;
    background-color: #1f2224;
    border: 2px solid #8a8d8f;
    color: #f0f0f0;
    font-size: 20px;
    line-height: 32px;
    text-align: center;
}
```
